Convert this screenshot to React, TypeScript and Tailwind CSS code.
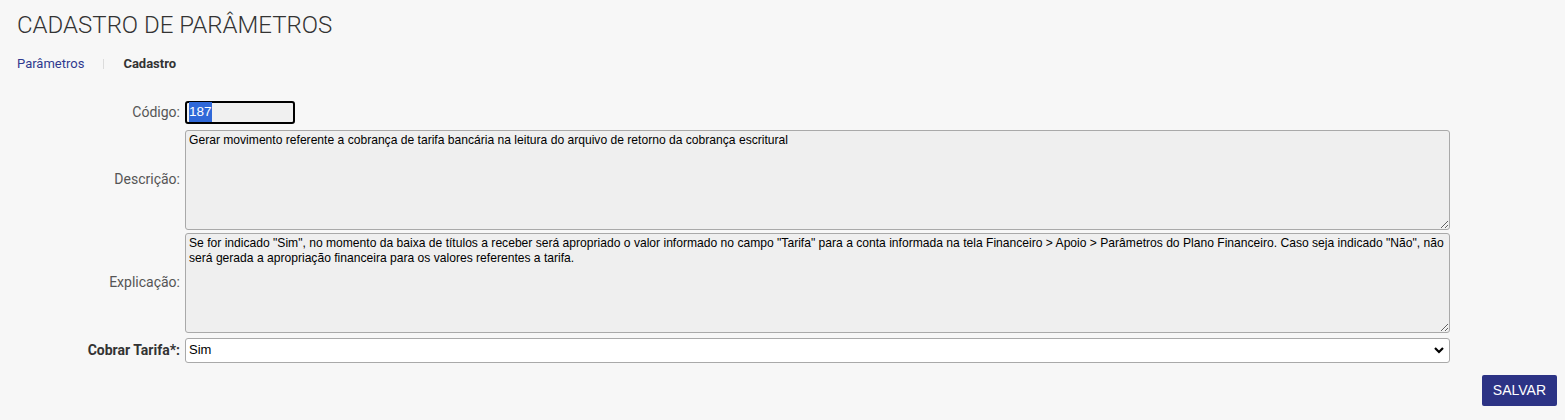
import React from 'react';

const descricao =
  'Gerar movimento referente a cobrança de tarifa bancária na leitura do arquivo de retorno da cobrança escritural';
const explicacao =
  'Se for indicado "Sim", no momento da baixa de títulos a receber será apropriado o valor informado no campo "Tarifa" para a conta informada na tela Financeiro > Apoio > Parâmetros do Plano Financeiro. Caso seja indicado "Não", não será gerada a apropriação financeira para os valores referentes a tarifa.';

const Label: React.FC<{ text: string; bold?: boolean }> = ({ text, bold }) => (
  <div
    className={`w-[181px] shrink-0 pr-px text-right text-[14px] ${bold ? 'font-bold text-[#333]' : 'text-[#555]'}`}
  >
    {text}
  </div>
);

const App: React.FC = () => {
  return (
    <div className="min-h-[420px] bg-[#f7f7f7] font-['Roboto',sans-serif] text-[#333]">
      <div className="px-[17px] pt-[10px]">
        <h1 className="text-[24px] font-light leading-[30px] text-[#333]">CADASTRO DE PARÂMETROS</h1>

        {/* Breadcrumb */}
        <div className="mt-[14px] flex items-center text-[13px]">
          <span className="text-[#2f3a8f]">Parâmetros</span>
          <span className="mx-[19px] h-[10px] w-px bg-[#dcdcdc]" />
          <span className="font-bold text-[#333]">Cadastro</span>
        </div>
      </div>

      {/* Form */}
      <div className="mt-[27px] w-[1450px]">
        <div className="flex items-center">
          <Label text="Código:" />
          <div className="ml-[4px] flex h-[23px] w-[110px] items-center rounded-[3px] border-2 border-black bg-[#f0f0f0] px-[2px] font-['Liberation_Sans',Arial,sans-serif] text-[13.5px]">
            <span className="bg-[#2f68d8] text-white">187</span>
          </div>
        </div>

        <div className="mt-[6px] flex items-center">
          <Label text="Descrição:" />
          <textarea
            readOnly
            defaultValue={descricao}
            className="ml-[4px] block h-[100px] flex-1 resize rounded-[3px] border border-[#a9a9a9] bg-[#efefef] px-[3px] py-[2px] font-['Liberation_Sans',Arial,sans-serif] text-[12.1px] leading-[15px] text-black outline-none"
          />
        </div>

        <div className="mt-[3px] flex items-center">
          <Label text="Explicação:" />
          <textarea
            readOnly
            defaultValue={explicacao}
            className="ml-[4px] block h-[100px] flex-1 resize rounded-[3px] border border-[#a9a9a9] bg-[#efefef] px-[3px] py-[2px] font-['Liberation_Sans',Arial,sans-serif] text-[12.1px] leading-[15px] text-black outline-none"
          />
        </div>

        <div className="mt-[5px] flex items-center">
          <Label text="Cobrar Tarifa*:" bold />
          <div className="ml-[4px] flex h-[25px] flex-1 items-center justify-between rounded-[3px] border border-[#a9a9a9] bg-white pl-[3px] pr-[4px] font-['Liberation_Sans',Arial,sans-serif] text-[13px] text-black">
            <span>Sim</span>
            <svg width="12" height="12" viewBox="0 0 12 12">
              <path d="M2 4l4 4 4-4" fill="none" stroke="#000" strokeWidth="2.2" />
            </svg>
          </div>
        </div>
      </div>

      <div className="mt-[12px] flex justify-end pr-[8px]">
        <button className="h-[31px] rounded-[2px] bg-[#2c3385] px-[11px] font-['Liberation_Sans',Arial,sans-serif] text-[14px] text-white">
          SALVAR
        </button>
      </div>
    </div>
  );
};

export default App;
